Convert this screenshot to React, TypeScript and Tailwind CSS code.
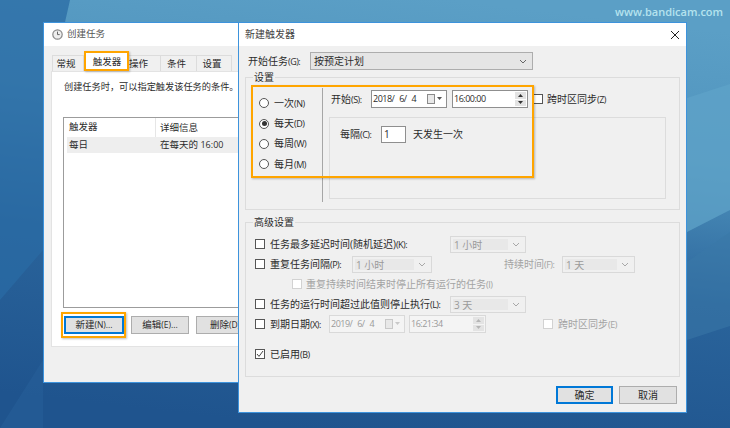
import type { ReactNode } from "react";

function Wallpaper() {
  return (
    <svg className="absolute inset-0" width="730" height="428" viewBox="0 0 730 428">
      <defs>
        <linearGradient id="wall" x1="0.62" y1="0" x2="0.42" y2="1">
          <stop offset="0" stopColor="#5b9fc6" />
          <stop offset="0.3" stopColor="#4f93bd" />
          <stop offset="0.62" stopColor="#2a649b" />
          <stop offset="1" stopColor="#1f548e" />
        </linearGradient>
      </defs>
      <rect width="730" height="428" fill="url(#wall)" />
      <polygon points="0,0 70,0 43,120 43,250 0,300" fill="#2a6ba4" opacity="0.75" />
      <polygon points="687,98 730,84 730,210 687,232" fill="#5fa3c8" opacity="0.75" />
      <polygon points="687,262 730,232 730,326 687,340" fill="#3a78a8" opacity="0.55" />
      <polygon points="0,428 43,360 43,428" fill="#2a659d" opacity="0.4" />
    </svg>
  );
}

// the mnemonic part of a label is narrower than the CJK text
function Mn({ children }: { children: ReactNode }) {
  return <span className="text-[9px] tracking-[-0.5px]">{children}</span>;
}

function Check({ on, off }: { on?: boolean; off?: boolean }) {
  return (
    <span className={`flex h-[10px] w-[10px] shrink-0 items-center justify-center border bg-white ${off ? "border-[#d2d2d2]" : "border-[#555]"}`}>
      {on && (
        <svg width="8" height="8" viewBox="0 0 8 8" fill="none" stroke="#444" strokeWidth="1">
          <path d="M1 4l2 2.4L7 1" />
        </svg>
      )}
    </span>
  );
}

function Radio({ label, mn, on }: { label: string; mn: string; on?: boolean }) {
  return (
    <div className="flex h-[20.4px] items-center">
      <span className="flex h-[10px] w-[10px] shrink-0 items-center justify-center rounded-full border border-[#555] bg-white">
        {on && <span className="h-[5px] w-[5px] rounded-full bg-[#333]" />}
      </span>
      <span className="ml-[5px]">{label}<Mn>{mn}</Mn></span>
    </div>
  );
}

function Chevron({ color = "#666" }: { color?: string }) {
  return (
    <svg width="8" height="5" viewBox="0 0 8 5" fill="none" stroke={color} strokeWidth="1">
      <path d="M1 1l3 3 3-3" />
    </svg>
  );
}

function Combo({ value, width, off }: { value: string; width: string; off?: boolean }) {
  return (
    <div className={`flex h-[17px] shrink-0 items-center border p-[2px] ${width} ${off ? "border-[#d9d9d9] text-[#9a9a9a]" : "border-[#adadad] bg-[#e5e5e5]"}`}>
      <span className={`h-full flex-1 pl-[1px] leading-[12px] ${off ? "bg-[#e8e8e8]" : ""}`}>{value}</span>
      <span className="flex w-[15px] justify-center">
        <Chevron color={off ? "#a8a8a8" : "#666"} />
      </span>
    </div>
  );
}

function DateBox({ value, width, off }: { value: string; width: string; off?: boolean }) {
  const tint = off ? "#c8c8c8" : "#8a8a8a";
  return (
    <div className={`flex h-[18px] shrink-0 items-center border pl-[1px] pr-[3px] ${width} ${off ? "border-[#d9d9d9] bg-[#f4f4f4] text-[#9a9a9a]" : "border-[#8f8f8f] bg-white"}`}>
      <span className="flex-1 whitespace-pre text-[9px] tracking-[-0.5px] [word-spacing:3px]">{value}</span>
      <svg width="16" height="10" viewBox="0 0 16 10">
        <rect x="0.5" y="0.5" width="7" height="9" fill="#e8e8e8" stroke={tint} />
        <path d="M10 3h5l-2.5 3z" fill={off ? "#c8c8c8" : "#555"} />
      </svg>
    </div>
  );
}

function TimeBox({ value, width, off }: { value: string; width: string; off?: boolean }) {
  const arrow = off ? "#b5b5b5" : "#333";
  return (
    <div className={`flex h-[18px] shrink-0 items-center border pl-[1px] pr-[1px] ${width} ${off ? "border-[#d9d9d9] bg-[#f4f4f4] text-[#9a9a9a]" : "border-[#8f8f8f] bg-white"}`}>
      <span className="flex-1 text-[9px] tracking-[-0.5px]">{value}</span>
      <span className="flex h-[14px] w-[11px] flex-col gap-[1px]">
        <span className="flex flex-1 items-center justify-center bg-[#e3e3e3]">
          <svg width="5" height="3" viewBox="0 0 5 3"><path d="M0 3h5L2.5 0z" fill={arrow} /></svg>
        </span>
        <span className="flex flex-1 items-center justify-center bg-[#e3e3e3]">
          <svg width="5" height="3" viewBox="0 0 5 3"><path d="M0 0h5L2.5 3z" fill={arrow} /></svg>
        </span>
      </span>
    </div>
  );
}

function Btn({ children, width, focus }: { children: ReactNode; width: string; focus?: boolean }) {
  return (
    <button className={`flex h-[18px] shrink-0 items-center justify-center bg-[#e1e1e1] ${width} ${focus ? "border-2 border-[#0078d7]" : "border border-[#adadad]"}`}>
      {children}
    </button>
  );
}

function Group({ title, className, children }: { title: string; className: string; children: ReactNode }) {
  return (
    <div className={`relative border border-[#dcdcdc] ${className}`}>
      <span className="absolute left-[7px] top-[-7px] bg-[#f0f0f0] px-[1px] text-[10px] leading-[12px]">{title}</span>
      {children}
    </div>
  );
}

function Highlight({ className }: { className: string }) {
  return <div className={`absolute border-2 border-[#ffa500] shadow-[1px_1px_2px_rgba(0,0,0,0.25)] ${className}`} />;
}

function TaskWindow() {
  return (
    <div className="absolute left-[43px] top-[22px] h-[361px] w-[240px] overflow-hidden border border-[#3d93dc] bg-[#f0f0f0] text-[9.5px] text-[#2b2b2b]">
      <div className="flex h-[23px] items-center bg-white pl-[8px]">
        <svg width="11" height="11" viewBox="0 0 11 11" fill="none">
          <circle cx="5.5" cy="5.5" r="4.7" fill="#eee" stroke="#8a8a8a" strokeWidth="1.2" />
          <path d="M5.5 2.6v3h2.2" stroke="#666" />
        </svg>
        <span className="ml-[4px] text-[#555]">创建任务</span>
      </div>
      <div className="flex h-[25px] items-end pl-[8px]">
        <span className="flex h-[16px] w-[32px] items-center justify-center border border-b-0 border-[#dcdcdc] pr-[4px] pt-[1px]">常规</span>
        <span className="flex h-[18px] w-[44px] items-center justify-center bg-white pl-[2px]">触发器</span>
        <span className="flex h-[16px] w-[33px] items-center justify-center border border-b-0 border-l-0 border-[#dcdcdc] pr-[11px] pt-[1px]">操作</span>
        <span className="flex h-[16px] w-[36px] items-center justify-center border border-b-0 border-l-0 border-[#dcdcdc] pr-[4px] pt-[1px]">条件</span>
        <span className="flex h-[16px] w-[35px] items-center justify-center border border-b-0 border-l-0 border-[#dcdcdc] pr-[4px] pt-[1px]">设置</span>
      </div>
      <div className="ml-[7px] h-[276px] border border-[#e3e3e3] bg-white pl-[12px] pt-[8px]">
        <p className="h-[14px] whitespace-nowrap text-[9.2px] leading-[14px]">创建任务时，可以指定触发该任务的条件。</p>
        <div className="-ml-[1px] mt-[23px] h-[191px] w-[200px] border border-[#9c9c9c] px-[3px]">
          <div className="flex h-[19px] items-center">
            <span className="w-[88px] pl-[2px]">触发器</span>
            <span className="h-full border-l border-[#e6e6e6] pl-[4px] leading-[19px]">详细信息</span>
          </div>
          <div className="flex h-[16px] items-center bg-[#eeeeee]">
            <span className="w-[89px] pl-[2px]">每日</span>
            <span className="pl-[4px]">在每天的 <span className="text-[9px]">16:00</span></span>
          </div>
        </div>
        <div className="mt-[8px] flex gap-[7px]">
          <Btn width="w-[60px]" focus>新建<span className="text-[8.5px]">(N)...</span></Btn>
          <Btn width="w-[58px]">编辑<span className="text-[8.5px]">(E)...</span></Btn>
          <Btn width="w-[58px]">删除<span className="text-[8.5px]">(D)</span></Btn>
        </div>
      </div>
    </div>
  );
}

function TriggerWindow() {
  const off = "text-[#a3a3a3]";
  return (
    <div className="absolute left-[238px] top-[22px] flex h-[391px] w-[449px] flex-col border border-[#3d93dc] bg-[#f0f0f0] text-[10px] text-[#2b2b2b]">
      <div className="flex h-[23px] items-center justify-between bg-white pl-[6px] pr-[6px]">
        <span className="text-[#444]">新建触发器</span>
        <svg width="10" height="10" viewBox="0 0 10 10" fill="none" stroke="#222" strokeWidth="1">
          <path d="M1 1l8 8M9 1l-8 8" />
        </svg>
      </div>

      <div className="flex items-center pl-[9px] pt-[6px]">
        <span className="w-[62px]">开始任务<Mn>(G):</Mn></span>
        <Combo value="按预定计划" width="w-[223px] h-[18px]" />
      </div>

      <Group title="设置" className="ml-[6px] mt-[7px] h-[133px] w-[435px]">
        <div className="flex pt-[10px]">
          <div className="h-[114px] w-[77px] shrink-0 border-r border-[#a6a6a6] pl-[13px] pt-[5px]">
            <Radio label="一次" mn="(N)" />
            <Radio label="每天" mn="(D)" on />
            <Radio label="每周" mn="(W)" />
            <Radio label="每月" mn="(M)" />
          </div>
          <div className="pl-[6px]">
            <div className="flex items-center pt-[2px]">
              <span className="w-[42px] pl-[2px]">开始<Mn>(S):</Mn></span>
              <DateBox value="2018/ 6/ 4" width="w-[76px]" />
              <span className="ml-[5px]" />
              <TimeBox value="16:00:00" width="w-[76px]" />
              <span className="ml-[5px]" />
              <Check />
              <span className="ml-[4px]">跨时区同步<Mn>(Z)</Mn></span>
            </div>
            <div className="mt-[9px] flex h-[82px] w-[337px] items-start border border-[#dcdcdc] pl-[10px] pt-[8px]">
              <span className="w-[41px] leading-[16px]">每隔<Mn>(C):</Mn></span>
              <span className="flex h-[17px] w-[25px] items-center border border-[#8f8f8f] bg-white pl-[2px]">1</span>
              <span className="ml-[7px] leading-[16px]">天发生一次</span>
            </div>
          </div>
        </div>
      </Group>

      <Group title="高级设置" className="ml-[6px] mt-[12px] h-[155px] w-[435px] text-[10px]">
        <div className="pl-[9px] pt-[11px]">
          <div className="flex h-[20px] items-center">
            <Check />
            <span className="ml-[5px] w-[180px] whitespace-nowrap">任务最多延迟时间(随机延迟)<Mn>(K):</Mn></span>
            <Combo value="1 小时" width="w-[76px]" off />
          </div>
          <div className="flex h-[20px] items-center">
            <Check />
            <span className="ml-[5px] w-[82px]">重复任务间隔<Mn>(P):</Mn></span>
            <Combo value="1 小时" width="w-[80px]" off />
            <span className={`ml-[72px] w-[58px] ${off}`}>持续时间<Mn>(F):</Mn></span>
            <Combo value="1 天" width="w-[73px]" off />
          </div>
          <div className="flex h-[20px] items-center pl-[37px]">
            <Check off />
            <span className={`ml-[4px] whitespace-nowrap ${off}`}>重复持续时间结束时停止所有运行的任务<Mn>(I)</Mn></span>
          </div>
          <div className="flex h-[20px] items-center">
            <Check />
            <span className="ml-[5px] w-[180px] whitespace-nowrap">任务的运行时间超过此值则停止执行<Mn>(L):</Mn></span>
            <Combo value="3 天" width="w-[76px]" off />
          </div>
          <div className="flex h-[20px] items-center">
            <Check />
            <span className="ml-[5px] w-[59px]">到期日期<Mn>(X):</Mn></span>
            <DateBox value="2019/ 6/ 4" width="w-[76px]" off />
            <span className="ml-[4px]" />
            <TimeBox value="16:21:34" width="w-[77px]" off />
            <span className="ml-[57px]" />
            <Check off />
            <span className={`ml-[5px] ${off}`}>跨时区同步<Mn>(E)</Mn></span>
          </div>
          <div className="mt-[10px] flex h-[20px] items-center">
            <Check on />
            <span className="ml-[5px]">已启用<Mn>(B)</Mn></span>
          </div>
        </div>
      </Group>

      <div className="flex justify-end gap-[6px] pr-[9px] pt-[9px]">
        <Btn width="w-[57px]" focus>确定</Btn>
        <Btn width="w-[58px]">取消</Btn>
      </div>
    </div>
  );
}

export default function App() {
  return (
    <div className="relative h-[428px] w-[730px] overflow-hidden font-['Open_Sans','Noto_Sans_CJK_SC',sans-serif]">
      <Wallpaper />
      <span className="absolute left-[615px] top-[4px] text-[11px] font-semibold text-[#b5e3ee]">www.bandicam.com</span>
      <TaskWindow />
      <TriggerWindow />
      <Highlight className="left-[84px] top-[51px] h-[20px] w-[45px]" />
      <Highlight className="left-[61px] top-[312px] h-[26px] w-[65px]" />
      <Highlight className="left-[251px] top-[85px] h-[93px] w-[283px]" />
    </div>
  );
}
